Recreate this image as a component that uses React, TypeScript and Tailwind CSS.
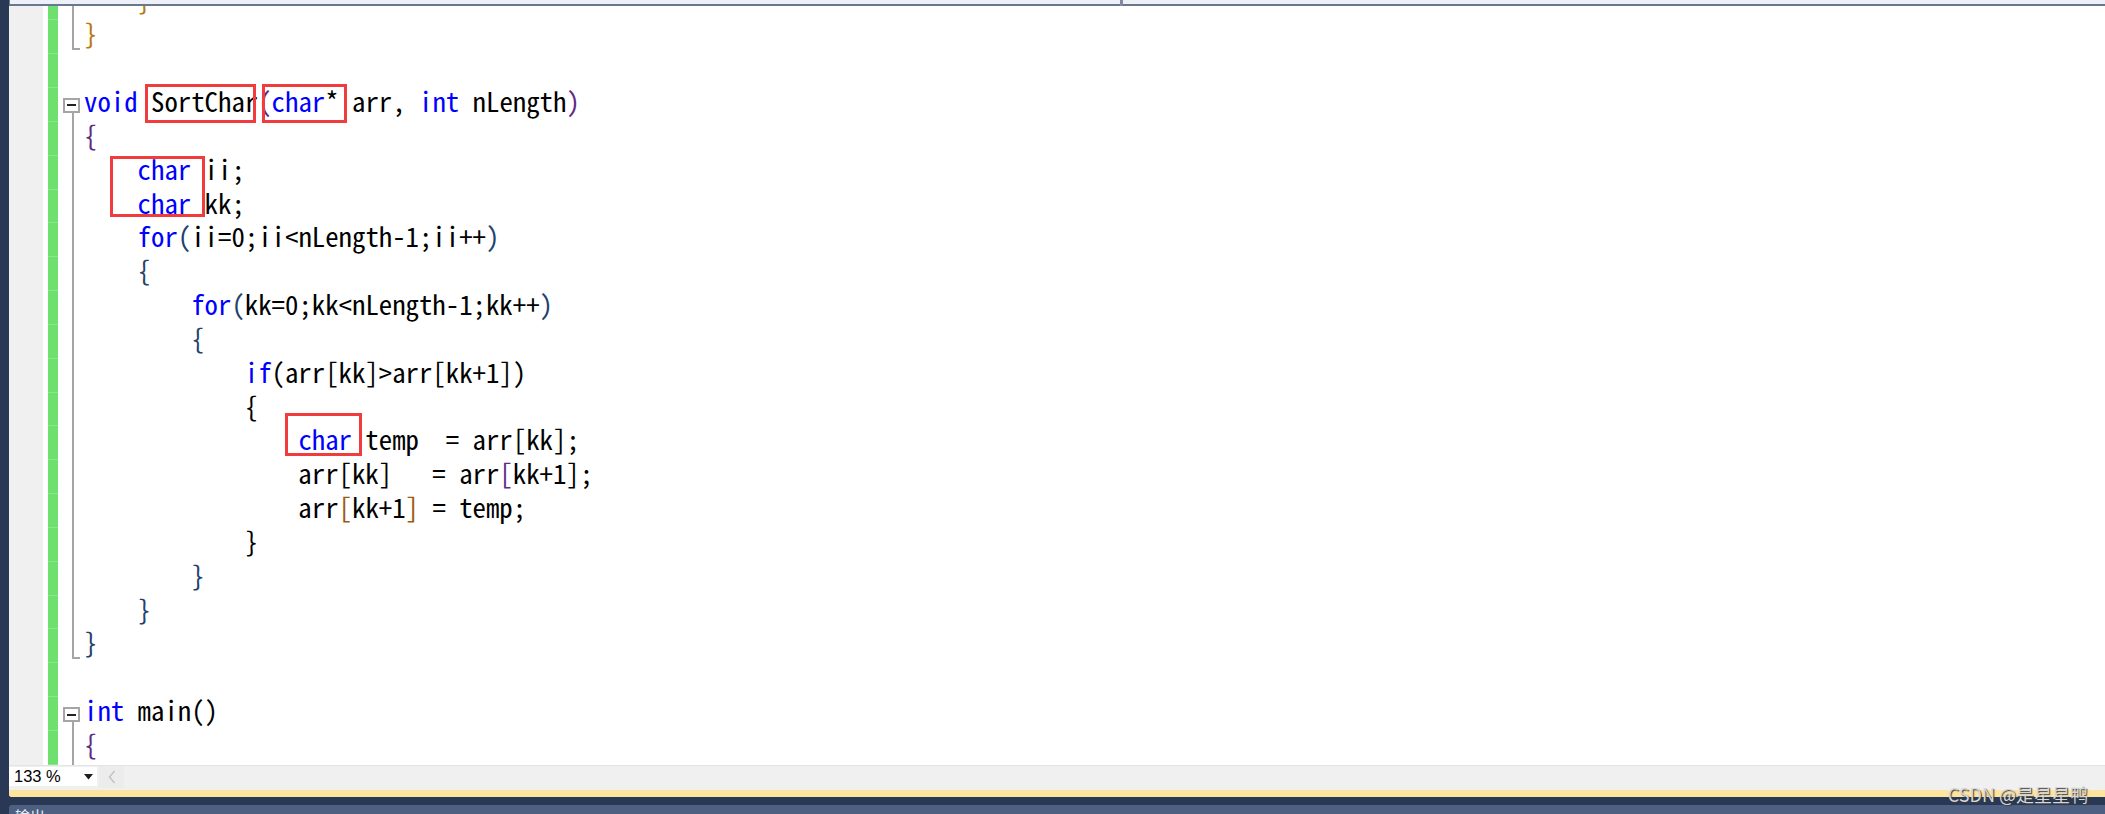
import React from 'react';

type Seg = [string, string?];
type Mark = 'none' | 'line' | 'end' | 'box';

const KW = 'text-[#0000ff]';
const BR1 = 'text-[#b8790f]';
const BR2 = 'text-[#5e2b86]';
const BR3 = 'text-[#23416e]';
const BR4 = 'text-[#9a5a12]';

const rows: { segs: Seg[]; mark: Mark }[] = [
  { segs: [['    '], ['}', BR1]], mark: 'line' },
  { segs: [['}', BR1]], mark: 'end' },
  { segs: [], mark: 'none' },
  {
    segs: [['void', KW], [' SortChar'], ['(', BR2], ['char', KW], ['* arr, '], ['int', KW], [' nLength'], [')', BR2]],
    mark: 'box',
  },
  { segs: [['{', BR2]], mark: 'line' },
  { segs: [['    '], ['char', KW], [' ii;']], mark: 'line' },
  { segs: [['    '], ['char', KW], [' kk;']], mark: 'line' },
  { segs: [['    '], ['for', KW], ['(', BR3], ['ii=0;ii<nLength-1;ii++'], [')', BR3]], mark: 'line' },
  { segs: [['    '], ['{', BR3]], mark: 'line' },
  { segs: [['        '], ['for', KW], ['(', BR3], ['kk=0;kk<nLength-1;kk++'], [')', BR3]], mark: 'line' },
  { segs: [['        '], ['{', BR3]], mark: 'line' },
  { segs: [['            '], ['if', KW], ['(arr[kk]>arr[kk+1])']], mark: 'line' },
  { segs: [['            {']], mark: 'line' },
  { segs: [['                '], ['char', KW], [' temp  = arr[kk];']], mark: 'line' },
  { segs: [['                arr[kk]   = arr'], ['[', BR2], ['kk+1];']], mark: 'line' },
  { segs: [['                arr'], ['[', BR4], ['kk+1'], [']', BR4], [' = temp;']], mark: 'line' },
  { segs: [['            }']], mark: 'line' },
  { segs: [['        '], ['}', BR3]], mark: 'line' },
  { segs: [['    '], ['}', BR3]], mark: 'line' },
  { segs: [['}', BR3]], mark: 'end' },
  { segs: [], mark: 'none' },
  { segs: [['int', KW], [' main()']], mark: 'box' },
  { segs: [['{', BR2]], mark: 'line' },
  { segs: [], mark: 'line' },
];

const Outline = ({ mark }: { mark: Mark }) => {
  if (mark === 'line') return <div className="ml-[14px] h-full border-l-2 border-[#a5a5a5]" />;
  if (mark === 'end')
    return <div className="ml-[14px] h-[31px] w-[8px] border-l-2 border-b-2 border-[#a5a5a5]" />;
  if (mark === 'box')
    return (
      <div className="flex h-full flex-col">
        <div className="ml-[5px] mt-[11px] flex h-[15px] w-[17px] items-center justify-center border-2 border-[#a5a5a5] bg-white">
          <div className="h-[2px] w-[9px] bg-[#222]" />
        </div>
        <div className="ml-[14px] flex-1 border-l-2 border-[#a5a5a5]" />
      </div>
    );
  return null;
};

const RedBox = ({ cls }: { cls: string }) => (
  <div className={`pointer-events-none absolute border-[3px] border-[#f03c3c] ${cls}`} />
);

export default function App() {
  return (
    <div className="relative flex h-[814px] w-[2105px] overflow-hidden bg-[#293955]">
      <div className="w-[9px] shrink-0" />
      <div className="flex flex-1 flex-col">
        {/* editor panel */}
        <div className="flex h-[797px] flex-col overflow-hidden rounded-bl-[3px] bg-white">
          {/* navigation bar remains */}
          <div className="flex h-[6px] shrink-0">
            <div className="w-[1111px] border-b-2 border-l border-[#6a778f] bg-[#eef0f7]" />
            <div className="w-[3px] bg-[#7f8aa0]" />
            <div className="flex-1 border-b-2 border-[#6a778f] bg-[#eef0f7]" />
          </div>

          {/* code area */}
          <div className="relative h-[759px] overflow-hidden">
            <div className="-mt-[20.55px] flex flex-col">
              {rows.map((r, i) => (
                <div key={i} className="flex h-[33.85px] shrink-0">
                  <div className="w-[34px] shrink-0 bg-[#f0f0f0]" />
                  <div className="w-[5px] shrink-0 bg-white" />
                  <div className="w-[10px] shrink-0 border-t border-[#8ae68a] bg-[#6ee06e]" />
                  <div className="w-[26px] shrink-0">
                    <Outline mark={r.mark} />
                  </div>
                  <div className="-mt-[3px] h-[33.85px] whitespace-pre font-['Noto_Sans_Mono_CJK_SC','Liberation_Mono',monospace] text-[26.8px] leading-[33.85px] text-black">
                    {r.segs.map(([t, c], j) => (
                      <span key={j} className={c}>
                        {t}
                      </span>
                    ))}
                  </div>
                </div>
              ))}
            </div>

            <RedBox cls="left-[136px] top-[78px] h-[39px] w-[111px]" />
            <RedBox cls="left-[253px] top-[78px] h-[39px] w-[85px]" />
            <RedBox cls="left-[101px] top-[150px] h-[61px] w-[95px]" />
            <RedBox cls="left-[276px] top-[407px] h-[43px] w-[77px]" />
          </div>

          {/* status / scroll bar */}
          <div className="flex h-[25px] shrink-0 items-start border-t border-[#e4e4e4] bg-[#f0f0f0]">
            <div className="mt-[1px] flex h-[19px] w-[88px] items-center justify-between bg-white pl-[5px] pr-[4px] font-['Liberation_Sans',sans-serif] text-[16.5px] leading-none text-black">
              <span>133 %</span>
              <svg width="9" height="6" viewBox="0 0 9 6">
                <path d="M0 0 H9 L4.5 5.5 Z" fill="#1e1e1e" />
              </svg>
            </div>
            <div className="ml-[2px] flex h-[22px] w-[25px] items-center justify-center bg-[#ececec]">
              <svg width="8" height="14" viewBox="0 0 8 14">
                <path d="M6.5 1 L1.5 7 L6.5 13" fill="none" stroke="#c2c2c2" strokeWidth="1.4" />
              </svg>
            </div>
            <div className="flex-1" />
          </div>
          <div className="h-[7px] shrink-0 rounded-bl-[3px] bg-[#fde59f]" />
        </div>

        <div className="h-[8px] shrink-0" />
        <div className="flex h-[9px] shrink-0 overflow-hidden rounded-tl-[3px] bg-[#4d6082] pl-[6px]">
          <span className="mt-[3px] font-['Noto_Sans_CJK_SC',sans-serif] text-[15px] leading-none text-[#e8ecf3]">
            输出
          </span>
        </div>
      </div>

      <div className="absolute right-[17px] top-[784px] font-['Noto_Sans_CJK_SC',sans-serif] text-[18px] leading-[20px] text-[#d6d6d6] [text-shadow:1px_1px_1px_#3a3a3a]">
        CSDN @是星星鸭
      </div>
    </div>
  );
}
